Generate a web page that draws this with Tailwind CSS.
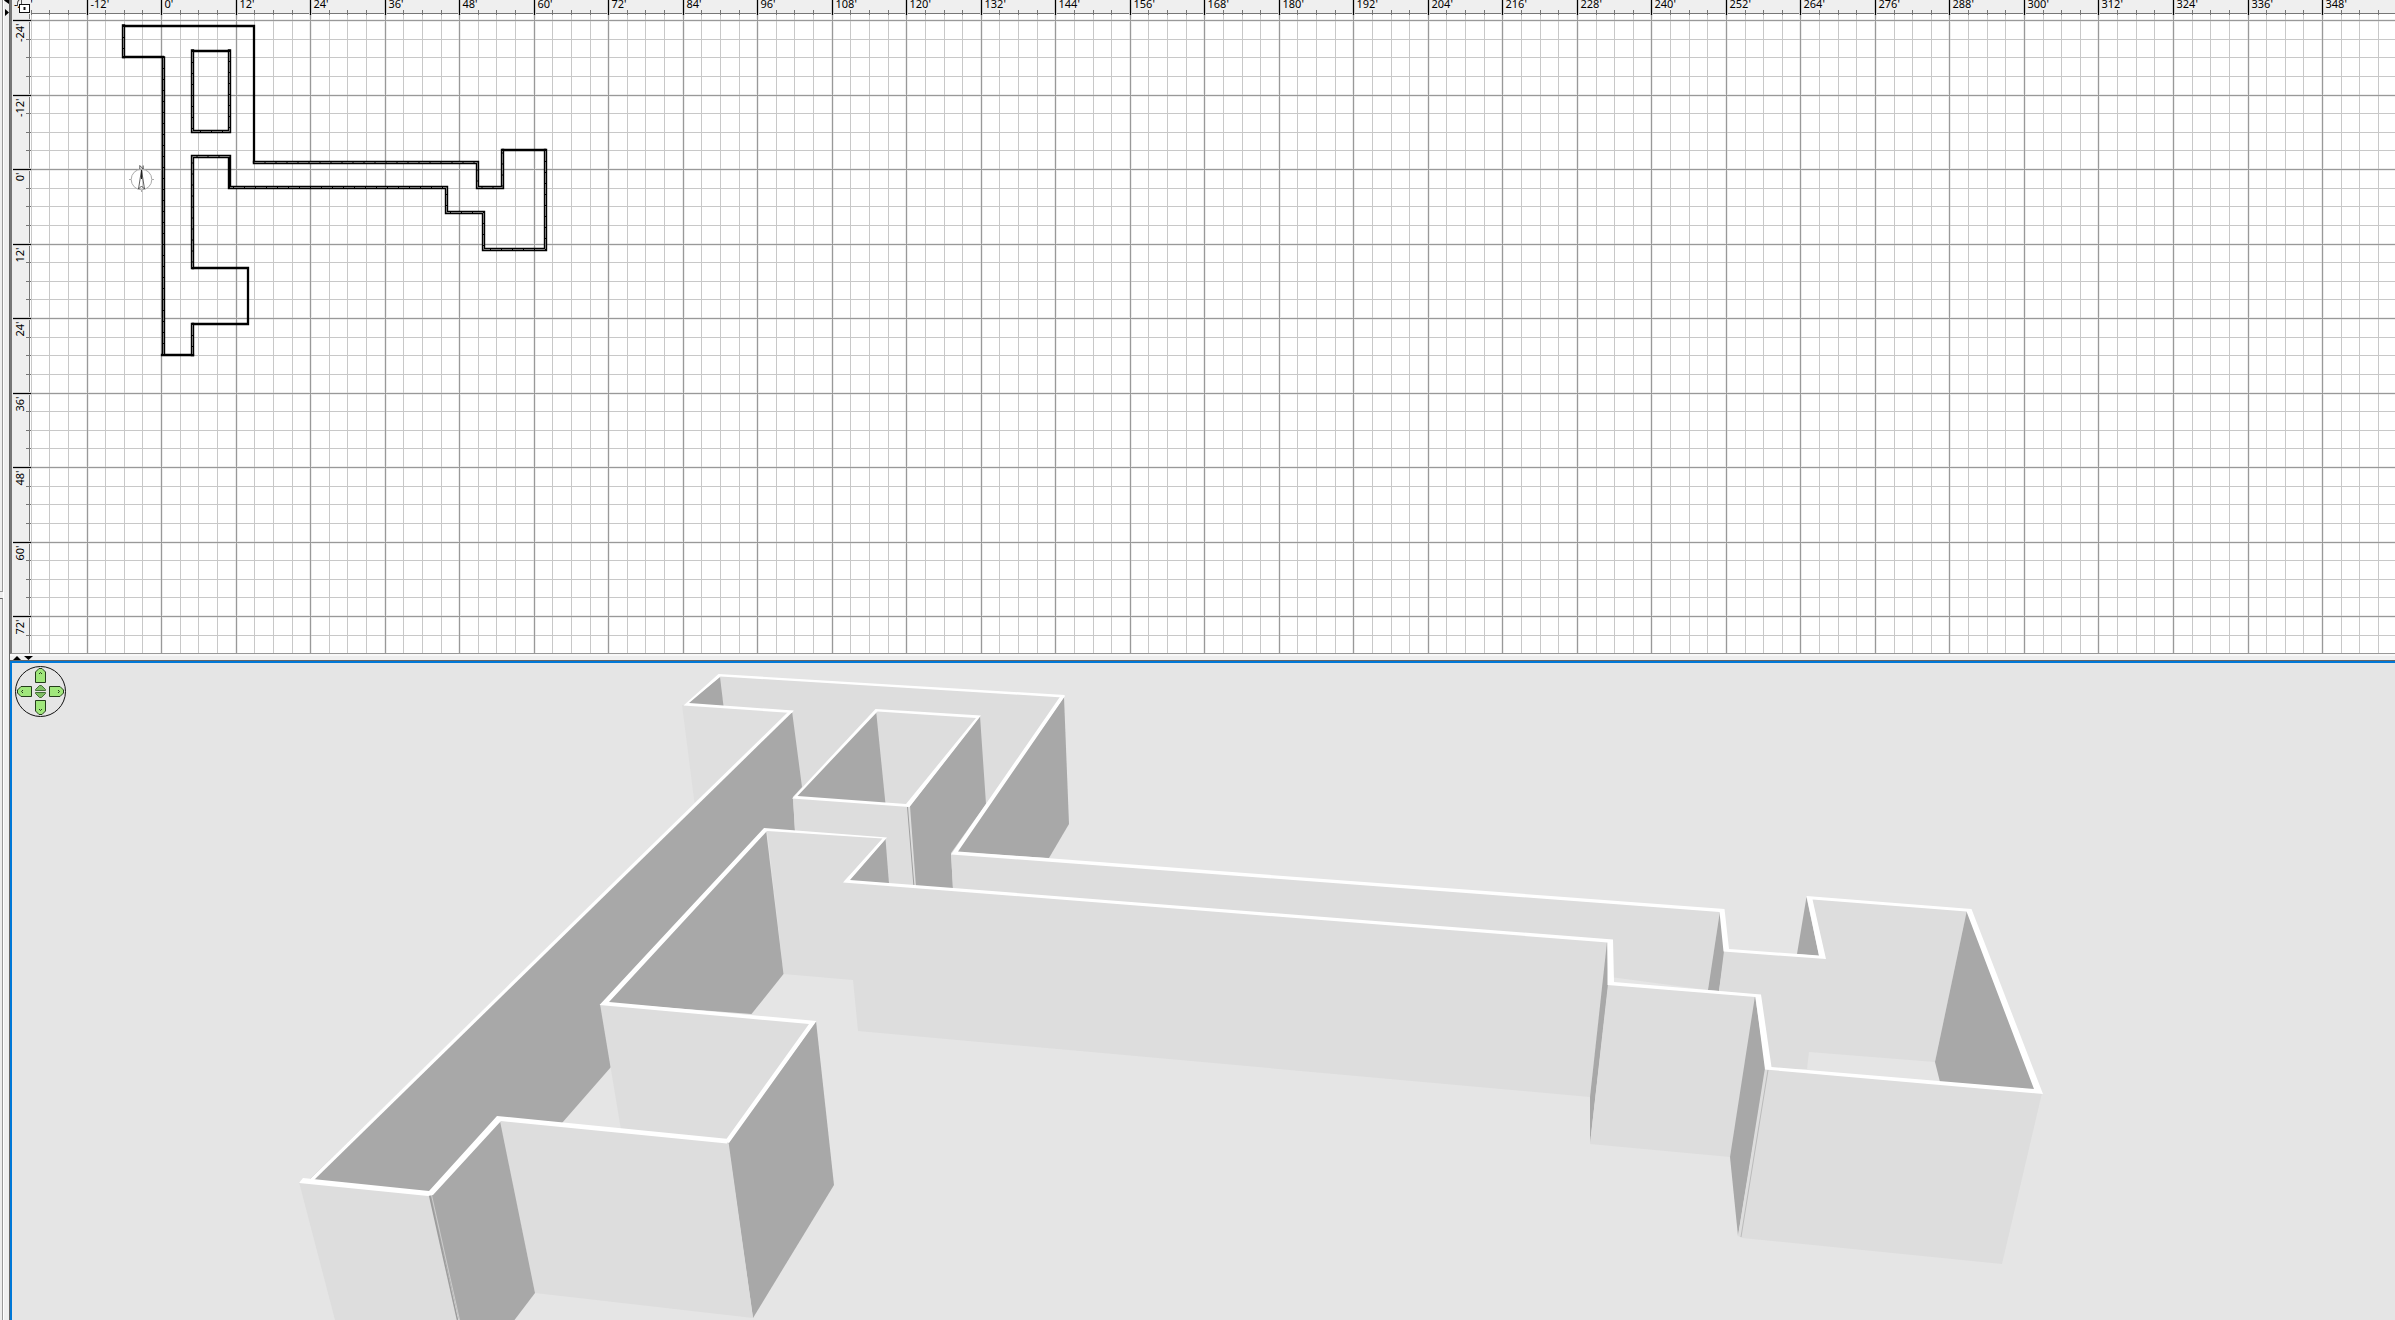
<!DOCTYPE html>
<html lang="en">
<head>
<meta charset="utf-8">
<title>Home plan</title>
<script src="https://cdn.jsdelivr.net/npm/@tailwindcss/browser@4"></script>
</head>
<body class="h-screen overflow-hidden bg-[#efefef]">
<div class="flex h-full">
  <!-- Edge of the side panels and the vertical split bar -->
  <aside class="flex h-full w-[9px] shrink-0">
    <div class="flex w-[4px] flex-col border-r border-white">
      <div class="h-[592px] border-r border-b border-r-[#999] border-b-[#999] bg-[#efefef]"></div>
      <div class="h-[6px]"></div>
      <div class="flex-1 border-t border-r border-t-[#666] border-r-[#999] bg-[#ececec]"></div>
    </div>
    <div class="w-[5px]">
      <svg class="block h-5 w-[5px]" viewBox="0 0 5 20"><path d="M5 -3V4L0 0.500Z M1 9V16L5 12.500Z"/></svg>
    </div>
  </aside>
  <main class="flex h-full min-w-0 flex-1 flex-col border-l border-[#666]">
    <section class="flex h-1/2 flex-col" aria-label="Plan">
      <div class="min-h-0 flex-1 border-b border-l-2 border-b-[#999] border-l-[#777] bg-white">
        <svg class="block h-full w-full" aria-label="Floor plan" font-family="'Noto Sans', 'Open Sans', sans-serif" font-size="11">
          <g transform="translate(-12 0)">
            <g id="grid" shape-rendering="crispEdges"></g>
            <g fill="none" stroke="#000" stroke-linecap="square">
              <path stroke-width="2.300" d="M123.500 26H254V162 M123.500 57H163 M193 268H248V324H193 M193 355H162 M503 150H545 M193 51H229"/>
              <path stroke-width="3.400" d="M123.500 26V56.500 M163.500 58V354 M192.500 51V131.500H229.500V51 M254.500 162.500H477.500V187.500H502.500V150.500 M545.500 150.500V249.500H483.500V212.500H446.500V187.500H229.500V156.500H192.500V267.500 M192.500 324.500V354.500"/>
              <path stroke="#777" stroke-dasharray="10 1" stroke-linecap="butt" d="M123.500 27V56 M163.500 58V354 M192.500 52V131.500H229.500V52 M254.500 162.500H477.500V187.500H502.500V151 M545.500 151V249.500H483.500V212.500H446.500V187.500H230 M229.500 156.500H192.500V267 M192.500 325V354"/>
            </g>
            <g fill="none" stroke="#aaa">
              <circle cx="141.500" cy="179.500" r="10.300"/>
              <path d="M129 179.500h2M152 179.500h2M141.500 190v2"/>
              <path stroke="#333" stroke-width=".8" d="M138.500 189L141.500 170L144.500 189L141.500 186Z M139.800 169V165.500L143.200 169V165.500"/>
              <path stroke="#222" d="M141.500 170V179"/>
            </g>
            <g id="rulers"></g>
            <g fill="none" stroke="#111">
              <rect x="19" y="0" width="12" height="14" fill="#efefef" stroke="none"/>
              <path stroke="#555" d="M17.500 6V3Q17.500 0 19.500 0 M21.500 0V5"/>
              <rect x="19.500" y="4.500" width="10" height="8" fill="#fff"/>
              <path stroke-width="2" d="M24.500 7V10"/>
            </g>
          </g>
        </svg>
      </div>
      <!-- Horizontal split bar -->
      <div class="h-[6px] shrink-0 border-t-2 border-[#f8f8f8] bg-[#efefef]">
        <svg class="block h-[4px] w-6" viewBox="0 0 24 4"><path d="M3 4H11L7 0Z M14 0H23L18.500 4Z"/></svg>
      </div>
    </section>
    <section class="relative h-1/2 border-t border-[#666]" aria-label="3D view">
      <div class="h-full border-t-2 border-l-2 border-[#0078d7] bg-[#e5e5e5]">
        <svg class="block h-full w-full" viewBox="12 663 2383 657" preserveAspectRatio="xMinYMin slice" aria-label="3D model">
          <g fill="#ddd">
            <path d="M720 675L1062 696L953 853V888L800 870L791 711L686 704Z"/>
            <path d="M682 705L791 711L694.500 803Z" fill="#dfdfdf"/>
            <path fill="#a8a8a8" d="M720 677L723.500 706L686 704Z"/>
            <path fill="#a8a8a8" d="M792 711L802 787L793 797L795 831L764 829L605 1004L611 1067L562 1123L497 1117L429 1195L308 1181Z"/>
            <path fill="#a8a8a8" d="M876 710L885.500 804L793 798Z"/>
            <path d="M793 798L908 806L916 888H880L795 832Z"/>
            <path fill="#a8a8a8" d="M910 806L980 716L986 804L951 853L953 889L916 887Z"/>
            <path fill="none" stroke="#a0a0a0" d="M907.500 807L914 887"/>
            <path fill="#a8a8a8" d="M1064 697L1069 824L1049 858L955 852Z"/>
            <path d="M951 853L1720 911L1708 990L953 889Z"/>
            <path fill="#a8a8a8" d="M1720 911L1725 951L1719 991L1708 990Z"/>
            <path d="M1724 951L1825 958L1812 898L1967 910L1935 1062L1809 1052L1807 1069H1769L1758 995L1719 991Z"/>
            <path fill="#a8a8a8" d="M1806.500 897L1797 954L1819 956Z"/>
            <path fill="#a8a8a8" d="M1967 910L2036 1090L1940 1082L1935 1062Z"/>
            <path d="M844 881L1608 941L1590 1097L858 1031L853 980L783.500 974L767 830L882 838Z"/>
            <path fill="#a8a8a8" d="M885.500 839L889 884L848 881Z"/>
            <path fill="#a8a8a8" d="M766 830L783.500 974L751.500 1014L606 1003Z"/>
            <path d="M600 1004L812 1022L727 1142L621 1130Z"/>
            <path fill="#a8a8a8" d="M816 1021L834 1185L753 1318L728 1143Z"/>
            <path d="M499 1119L728.500 1142L753 1318L535 1293Z"/>
            <path fill="#a8a8a8" d="M500 1121L535 1293L514.500 1320H459L429 1195Z"/>
            <path d="M299 1182L429 1195L458 1320H335Z"/>
            <path fill="none" stroke="#9c9c9c" stroke-width="1.500" d="M429.500 1195L457.500 1320"/>
            <path fill="none" stroke="#ccc" d="M431.500 1195L459.500 1320"/>
            <path fill="#a8a8a8" d="M1607 942L1608.500 984L1590 1144V1097Z"/>
            <path d="M1608 984L1756 996L1730 1157L1590 1144Z"/>
            <path fill="#a8a8a8" d="M1755 996L1766 1068L1738 1236L1730 1157Z"/>
            <path d="M1765 1068L2042 1093L2002 1264L1742 1238L1738 1236Z"/>
            <path fill="none" stroke="#bbb" d="M1768 1070L1741 1237"/>
          </g>
          <g fill="#fff">
            <path d="M718.500 674L1065 695L1063 697.500L720.500 676.500L689 703L793 710.500L792 713L683.500 705.500Z"/>
            <path d="M789 711L794 710.500L313 1181L306 1183Z"/>
            <path d="M299 1183L303 1178L429 1191L497 1116L729 1139L727 1143.500L501 1121L433 1195L428 1196Z"/>
            <path fill-rule="evenodd" d="M875.500 709L981 715.500L909.500 807L792 798.500Z M877.500 711.500L797.500 796L906 804L976 718Z"/>
            <path d="M1060.500 696L1065 696L958 851.500L1724.500 909L1729 949L1819 955.500L1806.500 896L1971.500 909L2043 1094L1765 1069.500L1755.500 997L1607.500 985V942.500L843 882.500L882.500 838.500L767 831L609 1002L816.500 1021L729 1143L725 1141L809 1024L599.500 1005L764 828L887 837.500L850 880L1613 939.500L1614 982L1761 994.500L1771.500 1067L2034 1089L1966.500 911.500L1812.500 899.500L1826 959L1723.500 951.500L1719.500 912L951 854.500Z"/>
          </g>
        </svg>
      </div>
      <!-- Camera navigation pad -->
      <div class="absolute top-[5px] left-[5px] grid size-[51px] grid-cols-[15px_17px_15px] grid-rows-[15px_17px_15px] place-content-center place-items-center rounded-full border border-[#111]">
        <button class="col-start-2 h-[15px] w-[11px]" aria-label="Go forward"><svg class="block size-full" viewBox="0 0 11 15" fill="#a0e77c" stroke="#243c1b"><path d="M.5 14.500V4L4 .5H7L10.500 4V14.500Z"/><path d="M4 6L5.500 4.500L7 6" fill="none"/></svg></button>
        <button class="col-start-1 row-start-2 h-[11px] w-[15px]" aria-label="Turn left"><svg class="block size-full" viewBox="0 0 15 11" fill="#a0e77c" stroke="#243c1b"><path d="M14.500 .5H4L.5 4V7L4 10.500H14.500Z"/><path d="M6 4L4.500 5.500L6 7" fill="none"/></svg></button>
        <div class="col-start-2 row-start-2 flex flex-col gap-px">
          <button class="block h-[6px] w-[11px]" aria-label="Go up"><svg class="block size-full" viewBox="0 0 11 6" fill="#7fbf65" stroke="#456b38"><path d="M.5 5.500V4.500L4.500 .5H6.500L10.500 4.500V5.500Z"/></svg></button>
          <button class="block h-[6px] w-[11px]" aria-label="Go down"><svg class="block size-full" viewBox="0 0 11 6" fill="#7fbf65" stroke="#456b38"><path d="M.5 .5V1.500L4.500 5.500H6.500L10.500 1.500V.5Z"/></svg></button>
        </div>
        <button class="col-start-3 row-start-2 h-[11px] w-[15px]" aria-label="Turn right"><svg class="block size-full" viewBox="0 0 15 11" fill="#a0e77c" stroke="#243c1b"><path d="M.5 .5H11L14.500 4V7L11 10.500H.5Z"/><path d="M9 4L10.500 5.500L9 7" fill="none"/></svg></button>
        <button class="col-start-2 row-start-3 h-[15px] w-[11px]" aria-label="Go backward"><svg class="block size-full" viewBox="0 0 11 15" fill="#a0e77c" stroke="#243c1b"><path d="M.5 .5V11L4 14.500H7L10.500 11V.5Z"/><path d="M4 9L5.500 10.500L7 9" fill="none"/></svg></button>
      </div>
    </section>
  </main>
</div>
<script>
// Grid and rulers: one minor step is 3 feet, a major line every 12 feet.
const STEP = 74.5 / 4, X0 = 161.6, Y0 = 169.6, W = Math.max(innerWidth, 800), H = Math.max(innerHeight / 2, 400);
let halo = '', minor = '', major = '', ticks = '', bold = '', labels = '';
for (let i = -7; X0 + i * STEP < W; i++) {
  const x = Math.floor(X0 + i * STEP * 1.0002) + 0.5, big = i % 4 === 0;
  if (x < 31) continue;
  if (big) {
    halo += `M${x} 14V${H}`; major += `M${x} 14V${H}`; bold += `M${x} 0V15`;
    labels += `<text x="${x + 3}" y="8">${i * 3}'</text>`;
  } else { minor += `M${x} 14V${H}`; ticks += `M${x} 10V15`; }
}
for (let i = -8; Y0 + i * STEP < H; i++) {
  const y = Math.floor(Y0 + i * STEP) + 0.5, big = i % 4 === 0;
  if (big) {
    halo += `M30 ${y}H${W}`; major += `M30 ${y}H${W}`; bold += `M13 ${y}H31`;
    if (y < H - 20) labels += `<text transform="translate(24 ${y + 3}) rotate(-90)" text-anchor="end">${i * 3}'</text>`;
  } else { minor += `M30 ${y}H${W}`; ticks += `M26 ${y}H31`; }
}
document.getElementById('grid').innerHTML =
  `<path d="${halo}" stroke="#ededed" stroke-width="3"/><path d="${minor}" stroke="#c8c8c8"/><path d="${major}" stroke="#999"/>`;
document.getElementById('rulers').innerHTML =
  `<path fill="#efefef" d="M12 0H${W}V13H29V${H}H12Z"/>` +
  `<g shape-rendering="crispEdges"><path d="M30 13.500H${W} M29.500 14V${H}" stroke="#777"/><path d="${ticks}" stroke="#777"/><path d="${bold}" stroke="#ccc" stroke-width="3"/><path d="${bold}" stroke="#000"/></g>` +
  `<text x="14" y="8">-24'</text>` + labels;
</script>
</body>
</html>
